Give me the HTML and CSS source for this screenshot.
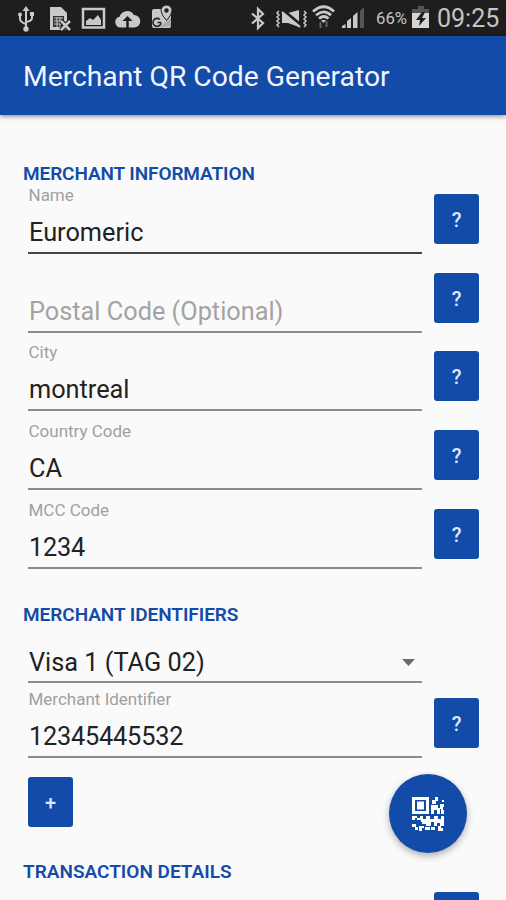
FILE: index.html
```html
<!DOCTYPE html>
<html lang="en">
<head>
    <meta charset="UTF-8">
    <meta name="viewport" content="width=device-width, initial-scale=1.0">
    <title>Merchant QR Code Generator</title>
    <link rel="stylesheet" href="styles.css">
</head>
<body>
    <div class="status-bar">
        <svg class="status-icons" width="180" height="36" viewBox="0 0 180 36" fill="#c9c9c9">
            <!-- usb -->
            <g stroke="#c9c9c9" stroke-width="2" fill="none">
                <path d="M26 9v19M20 15v4q0 3 6 5M32 15v3q0 3-6 4"/>
            </g>
            <path d="M26 6l3.500 5h-7z"/>
            <circle cx="26" cy="29" r="2.700"/>
            <circle cx="20" cy="14.500" r="2"/>
            <path d="M30 12h4v4h-4z"/>
            <!-- sim file -->
            <path d="M50 7h11l6 6v17H50z"/>
            <path d="M53 16h11v11H53z" fill="#333"/>
            <path d="M54 18h9M54 21h9M54 24h9M57 17v10M60 17v10" stroke="#c9c9c9"/>
            <path d="M61 21l9 9M70 21l-9 9" stroke="#1e1e1e" stroke-width="5"/>
            <path d="M61 21l9 9M70 21l-9 9" stroke="#c9c9c9" stroke-width="2.500"/>
            <!-- picture -->
            <path d="M83 9h21v18.500H83z" fill="none" stroke="#c9c9c9" stroke-width="2.500"/>
            <path d="M86 25v-4l4-3 3 2 5-5 3 5v5z"/>
            <!-- cloud -->
            <path d="M120 27.500a5.500 5.500 0 0 1-.5-10.800A8 8 0 0 1 134 15a6.200 6.200 0 0 1 0 12.500z"/>
            <path d="M127.500 28v-8" stroke="#1e1e1e" stroke-width="2.500"/>
            <path d="M122.500 21l5-5 5 5z" fill="#1e1e1e"/>
            <!-- maps -->
            <rect x="152" y="9" width="19" height="19" rx="2"/>
            <path d="M159 28l12-11v9z" fill="#aaa"/>
            <path d="M161 22.500h-3.500M161 22.500a4 4 0 1 1-1.200-3" fill="none" stroke="#222" stroke-width="1.600"/>
            <path d="M166.500 5a5.500 5.500 0 0 1 5.500 5.500q0 4-5.500 10q-5.500-6-5.500-10a5.500 5.500 0 0 1 5.500-5.500z" stroke="#1e1e1e"/>
            <circle cx="166.500" cy="10.500" r="2.200" fill="#1e1e1e"/>
        </svg>
        <svg class="status-icons" width="122" height="36" viewBox="246 0 122 36" fill="none" stroke="#c9c9c9">
            <!-- bluetooth -->
            <path d="M252 13.500l11 9.500-5 5V9l5 5-11 9.500" stroke-width="2.200"/>
            <!-- vibrate -->
            <path d="M279 11l-2 2 2 2-2 2 2 2-2 2 2 2-2 2 2 2M304 11l2 2-2 2 2 2-2 2 2 2-2 2 2 2-2 2" stroke-width="1.500"/>
            <path d="M282 13h6l11-3v17l-11-4h-6z" fill="#c9c9c9" stroke="none"/>
            <path d="M284 11l18 15" stroke="#1e1e1e" stroke-width="3"/>
            <path d="M282 12l18 15" stroke-width="2.200"/>
            <!-- wifi -->
            <path d="M313 11.500q11-9.500 21 0M316 15.200q8-6.500 15 0M319 18.500q5-4 9.500 0" stroke-width="2.700"/>
            <path d="M321 20h5l-2.500 3z" fill="#c9c9c9" stroke="none"/>
            <path d="M320.500 28v-6M326.500 21v6" stroke="#646464" stroke-width="2"/>
            <!-- signal -->
            <g fill="#c9c9c9" stroke="none">
                <path d="M342 28v-2l3.500-2v4zM347 28v-7l4-3v10zM353 28V16l4.500-4v16z"/>
                <path d="M360 28V11l4-4v21z" fill="#555"/>
            </g>
        </svg>
        <span class="battery-level">66%</span>
        <svg class="battery" width="18" height="24" viewBox="0 0 18 24">
            <path d="M0 3h6V0h6v3h5v6H0z" fill="#555"/>
            <path d="M0 7h17v15H0z" fill="#d4d4d4"/>
            <path d="M10 6l-6 8h4l-1 6 7-8h-4l3-6z" fill="#1e1e1e"/>
        </svg>
        <span class="clock">09:25</span>
    </div>

    <header class="app-bar">
        <h1>Merchant QR Code Generator</h1>
    </header>

    <main class="content">
        <h2 class="title-info">MERCHANT INFORMATION</h2>
        <div class="row">
            <div class="field focused">
                <label for="name">Name</label>
                <input type="text" id="name" value="Euromeric">
            </div>
            <button type="button" class="btn">?</button>
        </div>
        <div class="row">
            <div class="field">
                <label for="postal"></label>
                <input type="text" id="postal" placeholder="Postal Code (Optional)">
            </div>
            <button type="button" class="btn">?</button>
        </div>
        <div class="row">
            <div class="field">
                <label for="city">City</label>
                <input type="text" id="city" value="montreal">
            </div>
            <button type="button" class="btn">?</button>
        </div>
        <div class="row">
            <div class="field">
                <label for="country">Country Code</label>
                <input type="text" id="country" value="CA">
            </div>
            <button type="button" class="btn">?</button>
        </div>
        <div class="row">
            <div class="field">
                <label for="mcc">MCC Code</label>
                <input type="text" id="mcc" class="number" value="1234">
            </div>
            <button type="button" class="btn">?</button>
        </div>

        <h2 class="title-ids">MERCHANT IDENTIFIERS</h2>
        <div class="spinner">
            <span>Visa 1 (TAG 02)</span>
            <svg width="13" height="7" viewBox="0 0 13 7"><path d="M0 0h13L6.500 7z" fill="#6b6b6b"/></svg>
        </div>
        <div class="row">
            <div class="field">
                <label for="identifier">Merchant Identifier</label>
                <input type="text" id="identifier" class="number" value="12345445532">
            </div>
            <button type="button" class="btn">?</button>
        </div>
        <button type="button" class="btn btn-add">+</button>

        <h2 class="title-details">TRANSACTION DETAILS</h2>
        <div class="row">
            <div class="field"></div>
            <button type="button" class="btn" aria-label="Help"></button>
        </div>
    </main>

    <button type="button" class="fab" aria-label="Generate">
        <svg width="33" height="34" viewBox="0 0 33 34" fill="#fff">
            <path fill-rule="evenodd" d="M0 0h17v17H0zM3 3v11h11V3z"/>
            <path d="M5 4.500h7v8H5z"/>
            <path d="M23 0h3v4h-2v3h-4V3h3zM30 3h2v2h-2zM19 8h7v3h2v6h-3v-4h-3v4h-3zM28 7h4v3h-1v3h1v4h-3v-5h-1z"/>
            <path d="M0 19h5v2H3v2H0zM8 19h3v3h3v-3h4v3h4v-3h4v3h3v-3h3v10h-4v-3h-3v3h-3v-4h-3v4h-5v-2h-4v-2H9v-2H5v-2h3z"/>
            <path d="M0 27h4v3H0zM3 30h3v3H3zM7 29h5v2h-2v3H7zM13 30h5v3h-5zM19 30h4v3h-4zM26 29h3v2h2v3h-5z"/>
        </svg>
    </button>
</body>
</html>
```

FILE: styles.css
```css
* {
    margin: 0;
    padding: 0;
    box-sizing: border-box;
    font-family: Roboto, sans-serif;
}

body {
    background-color: #fafafa;
    height: 900px;
    overflow: hidden;
}

.status-bar {
    display: flex;
    height: 36px;
    background: #1e1e1e;
    color: #c4c4c4;
}

.status-icons + .status-icons {
    margin-left: 66px;
}

.battery-level {
    width: 44px;
    padding-left: 8px;
    font-size: 16.700px;
    line-height: 38px;
}

.battery {
    margin: 6px 0 0;
}

.clock {
    margin-left: 7px;
    font-size: 25px;
    line-height: 37px;
}

.app-bar {
    position: relative;
    height: 79px;
    padding-left: 23px;
    background: #124ba8;
    box-shadow: 0 1px 5px rgba(0, 0, 0, 0.5);
}

h1 {
    color: #f0f5ff;
    font-size: 28.250px;
    font-weight: 400;
    line-height: 81px;
    white-space: nowrap;
}

.content {
    height: 785px;
    padding: 47px 27px 0 23px;
    overflow: hidden;
}

h2 {
    height: 22px;
    color: #124ba8;
    font-size: 19px;
    font-weight: 600;
    line-height: 23px;
}

.title-info {
    margin-bottom: 2px;
    letter-spacing: -0.1px;
}

.title-ids {
    margin: 24px 0 17px;
    letter-spacing: -0.05px;
}

.row {
    display: flex;
    justify-content: space-between;
    height: 78.7px;
    padding-left: 5px;
}

.field {
    width: 394px;
}

label {
    display: block;
    height: 20px;
    padding-left: 0.5px;
    color: #a0a0a0;
    font-size: 17px;
    line-height: 19px;
}

input {
    display: block;
    width: 100%;
    height: 48px;
    padding: 11px 1px 4px;
    border: none;
    border-bottom: 2px solid #8c8c8c;
    background: transparent;
    color: #222;
    font-size: 25.300px;
    outline: none;
}

.number {
    letter-spacing: -0.2px;
}

.focused input {
    border-color: #444;
}

input::placeholder {
    color: #a3a3a3;
}

.btn {
    width: 45px;
    height: 50px;
    margin-top: 8px;
    padding-top: 2px;
    border: none;
    border-radius: 3px;
    background: #124ba8;
    color: #dce8ff;
    font-size: 20px;
    font-weight: 500;
}

.spinner {
    display: flex;
    align-items: center;
    justify-content: space-between;
    width: 394px;
    height: 41px;
    margin: 0 0 7px 5px;
    padding: 1px 7px 0 1px;
    border-bottom: 2px solid #8c8c8c;
    color: #222;
    font-size: 25.300px;
}

.btn-add {
    display: block;
    margin: 8px 0 0 5px;
}

.title-details {
    margin: 33px 0 2px;
}

.fab {
    position: absolute;
    left: 389px;
    top: 774px;
    display: flex;
    align-items: center;
    justify-content: center;
    width: 78px;
    height: 79px;
    border: none;
    border-radius: 50%;
    background: #124ba8;
    box-shadow: 0 3px 7px rgba(0, 0, 0, 0.3);
}
```
